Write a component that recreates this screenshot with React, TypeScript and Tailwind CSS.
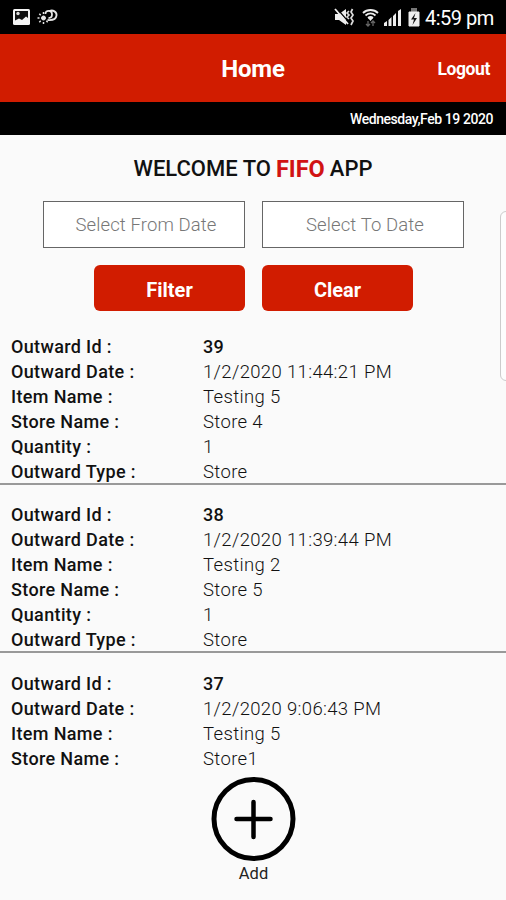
type Outward = {
  id: string;
  date: string;
  item: string;
  store: string;
  quantity: string;
  type: string;
};

const outwards: Outward[] = [
  { id: "39", date: "1/2/2020 11:44:21 PM", item: "Testing 5", store: "Store 4", quantity: "1", type: "Store" },
  { id: "38", date: "1/2/2020 11:39:44 PM", item: "Testing 2", store: "Store 5", quantity: "1", type: "Store" },
  { id: "37", date: "1/2/2020 9:06:43 PM", item: "Testing 5", store: "Store1", quantity: "1", type: "Store" },
];

function StatusBar() {
  return (
    <div className="flex h-[34px] items-center bg-black text-white">
      <svg className="ml-3 h-[18px] w-[19px]" viewBox="0 0 19 18">
        <rect x="1" y="1" width="17" height="16" rx="1.5" fill="#f5f5f5" />
        <path d="M3 3h13v7l-2-1.500-4 3.500-3-1.500-4 2z" fill="#111" />
        <circle cx="6" cy="5.5" r="1.7" fill="#ddd" />
      </svg>
      <svg className="ml-[6px] h-[18px] w-[21px]" viewBox="0 0 21 18" fill="none" stroke="#e5e5e5">
        <circle cx="6.500" cy="10" r="2" fill="#e5e5e5" />
        <path d="M6.500 4v2M6.500 14v2M.5 10h2M2.300 5.800l1.400 1.400M2.300 14.200l1.400-1.400M10.700 14.200l-1.400-1.400" strokeWidth="1.5" />
        <path d="M8.500 6C8 2 15 1.500 15 6.500c0 2-1.500 3.500-3.500 3.500M12.500 3C16 1.500 20 4 19.500 7.500c-.5 4-4 5-9 4.500" strokeWidth="1.8" />
      </svg>
      <svg className="ml-auto h-[18px] w-[21px]" viewBox="0 0 21 18">
        <path d="M1 6h4l7-5v16l-7-5H1z" fill="#eee" />
        <path d="M2.500 0l13 15" stroke="#000" strokeWidth="1.2" />
        <path d="M1 1l13 15" stroke="#eee" strokeWidth="1.8" />
        <path d="M15 3l-2 2 2 2-2 2 2 2M18.500 1l-1.500 3 2 3-2 3 2 3-2 4" fill="none" stroke="#ddd" strokeWidth="1.7" />
      </svg>
      <svg className="ml-[7px] h-[19px] w-[17px]" viewBox="0 0 17 19" fill="none">
        <path d="M1 5C5 1 12 1 16 5M3.5 7.5c3-2.5 7-2.5 10 0M6 10c1.5-1.2 3.5-1.2 5 0" stroke="#eee" strokeWidth="1.8" />
        <path d="M6 10h5l-2.500 3z" fill="#eee" />
        <path d="M6 13v5M4 16l2 2 2-2M11 18v-5M9 15l2-2 2 2" stroke="#666" strokeWidth="1.3" />
      </svg>
      <svg className="ml-[5px] h-[18px] w-[18px]" viewBox="0 0 18 18" fill="#eee">
        <path d="M0 18v-3l3-2v5zM4.500 18v-6l3-3v9zM9 18V8l3-3v13z" />
        <path d="M14 18V3l3-2v17z" />
      </svg>
      <svg className="ml-[6px] h-[19px] w-[12px]" viewBox="0 0 12 19">
        <rect x="3" y="0" width="6" height="4" fill="#777" />
        <path d="M1 4h10v14H1z" fill="#eee" stroke="#eee" />
        <path d="M7.500 5L3 11.500h3L4.500 17 9 10H6z" fill="#111" />
      </svg>
      <span className="mt-[2px] mr-[13px] ml-[5px] w-[68px] text-[20px] leading-none tracking-[-0.5px] whitespace-nowrap">
        4:59 pm
      </span>
    </div>
  );
}

function DateField({ placeholder }: { placeholder: string }) {
  return (
    <div className="flex h-[47px] w-[202px] items-center justify-center border border-[#666] bg-white pt-[2px] pl-[5px] text-[18.500px] font-light tracking-[0.1px] text-[#777]">
      {placeholder}
    </div>
  );
}

function ActionButton({ label }: { label: string }) {
  return (
    <button className="h-[46px] w-[151px] rounded-[6px] bg-[#d11c00] pt-[3px] pl-[1px] text-[20px] font-bold text-white">
      {label}
    </button>
  );
}

function OutwardCard({ outward }: { outward: Outward }) {
  const rows = [
    ["Outward Id :", outward.id],
    ["Outward Date :", outward.date],
    ["Item Name :", outward.item],
    ["Store Name :", outward.store],
    ["Quantity :", outward.quantity],
    ["Outward Type :", outward.type],
  ];

  return (
    <div className="h-[168.5px] shrink-0 border-b-2 border-[#999] pt-[17.500px] pl-[11px]">
      {rows.map(([label, value], index) => (
        <div key={label} className="flex h-[25px] items-baseline text-[18px] leading-[25px] text-[#111]">
          <span className="w-[192px] font-medium tracking-[0.35px]">{label}</span>
          <span className={index === 0 ? "font-medium tracking-[0.3px]" : "text-[18.500px] font-light tracking-[0.35px]"}>
            {value}
          </span>
        </div>
      ))}
    </div>
  );
}

export default function App() {
  return (
    <main className="relative flex h-[900px] w-[506px] flex-col overflow-hidden bg-[#fafafa] font-['Roboto',sans-serif]">
      <StatusBar />
      <header className="grid h-[68px] grid-cols-3 items-center bg-[#d11c00] text-white">
        <h1 className="col-start-2 pt-[2px] text-center text-[24px] font-bold tracking-[-0.2px]">Home</h1>
        <span className="pt-[2px] pr-4 text-right text-[17.500px] font-bold tracking-[-0.4px]">Logout</span>
      </header>
      <div className="flex h-[33px] items-center justify-end bg-black pt-[2px] pr-[13px] text-[14px] font-medium tracking-[-0.43px] text-white">
        Wednesday,Feb 19 2020
      </div>
      <h2 className="flex h-[66px] items-center justify-center gap-[5px] text-[22px] font-medium text-[#111]">
        <span>WELCOME TO</span>
        <span className="pt-[3px] text-[23.500px] font-bold text-[#d11313]">FIFO</span>
        <span>APP</span>
      </h2>
      <div className="flex justify-center gap-[17px]">
        <DateField placeholder="Select From Date" />
        <DateField placeholder="Select To Date" />
      </div>
      <div className="mt-[17px] flex justify-center gap-[17px]">
        <ActionButton label="Filter" />
        <ActionButton label="Clear" />
      </div>
      <section className="mt-[5px] flex h-[461px] shrink-0 flex-col overflow-hidden">
        {outwards.map((outward) => (
          <OutwardCard key={outward.id} outward={outward} />
        ))}
      </section>
      <footer className="flex flex-col items-center">
        <svg className="h-[84px] w-[86px]" viewBox="0 0 86 84" fill="none" stroke="#000">
          <circle cx="43.500" cy="42" r="39.500" strokeWidth="5" />
          <path d="M43.500 25v35M26.500 42h34" strokeWidth="4.500" strokeLinecap="round" />
        </svg>
        <span className="pl-[1px] text-[16.500px] leading-[26px] text-[#222]">Add</span>
      </footer>
      {/* edge panel handle */}
      <div className="absolute top-[211px] left-[500px] h-[170px] w-5 rounded-[6px] border border-[#ccc] bg-white/50" />
    </main>
  );
}
